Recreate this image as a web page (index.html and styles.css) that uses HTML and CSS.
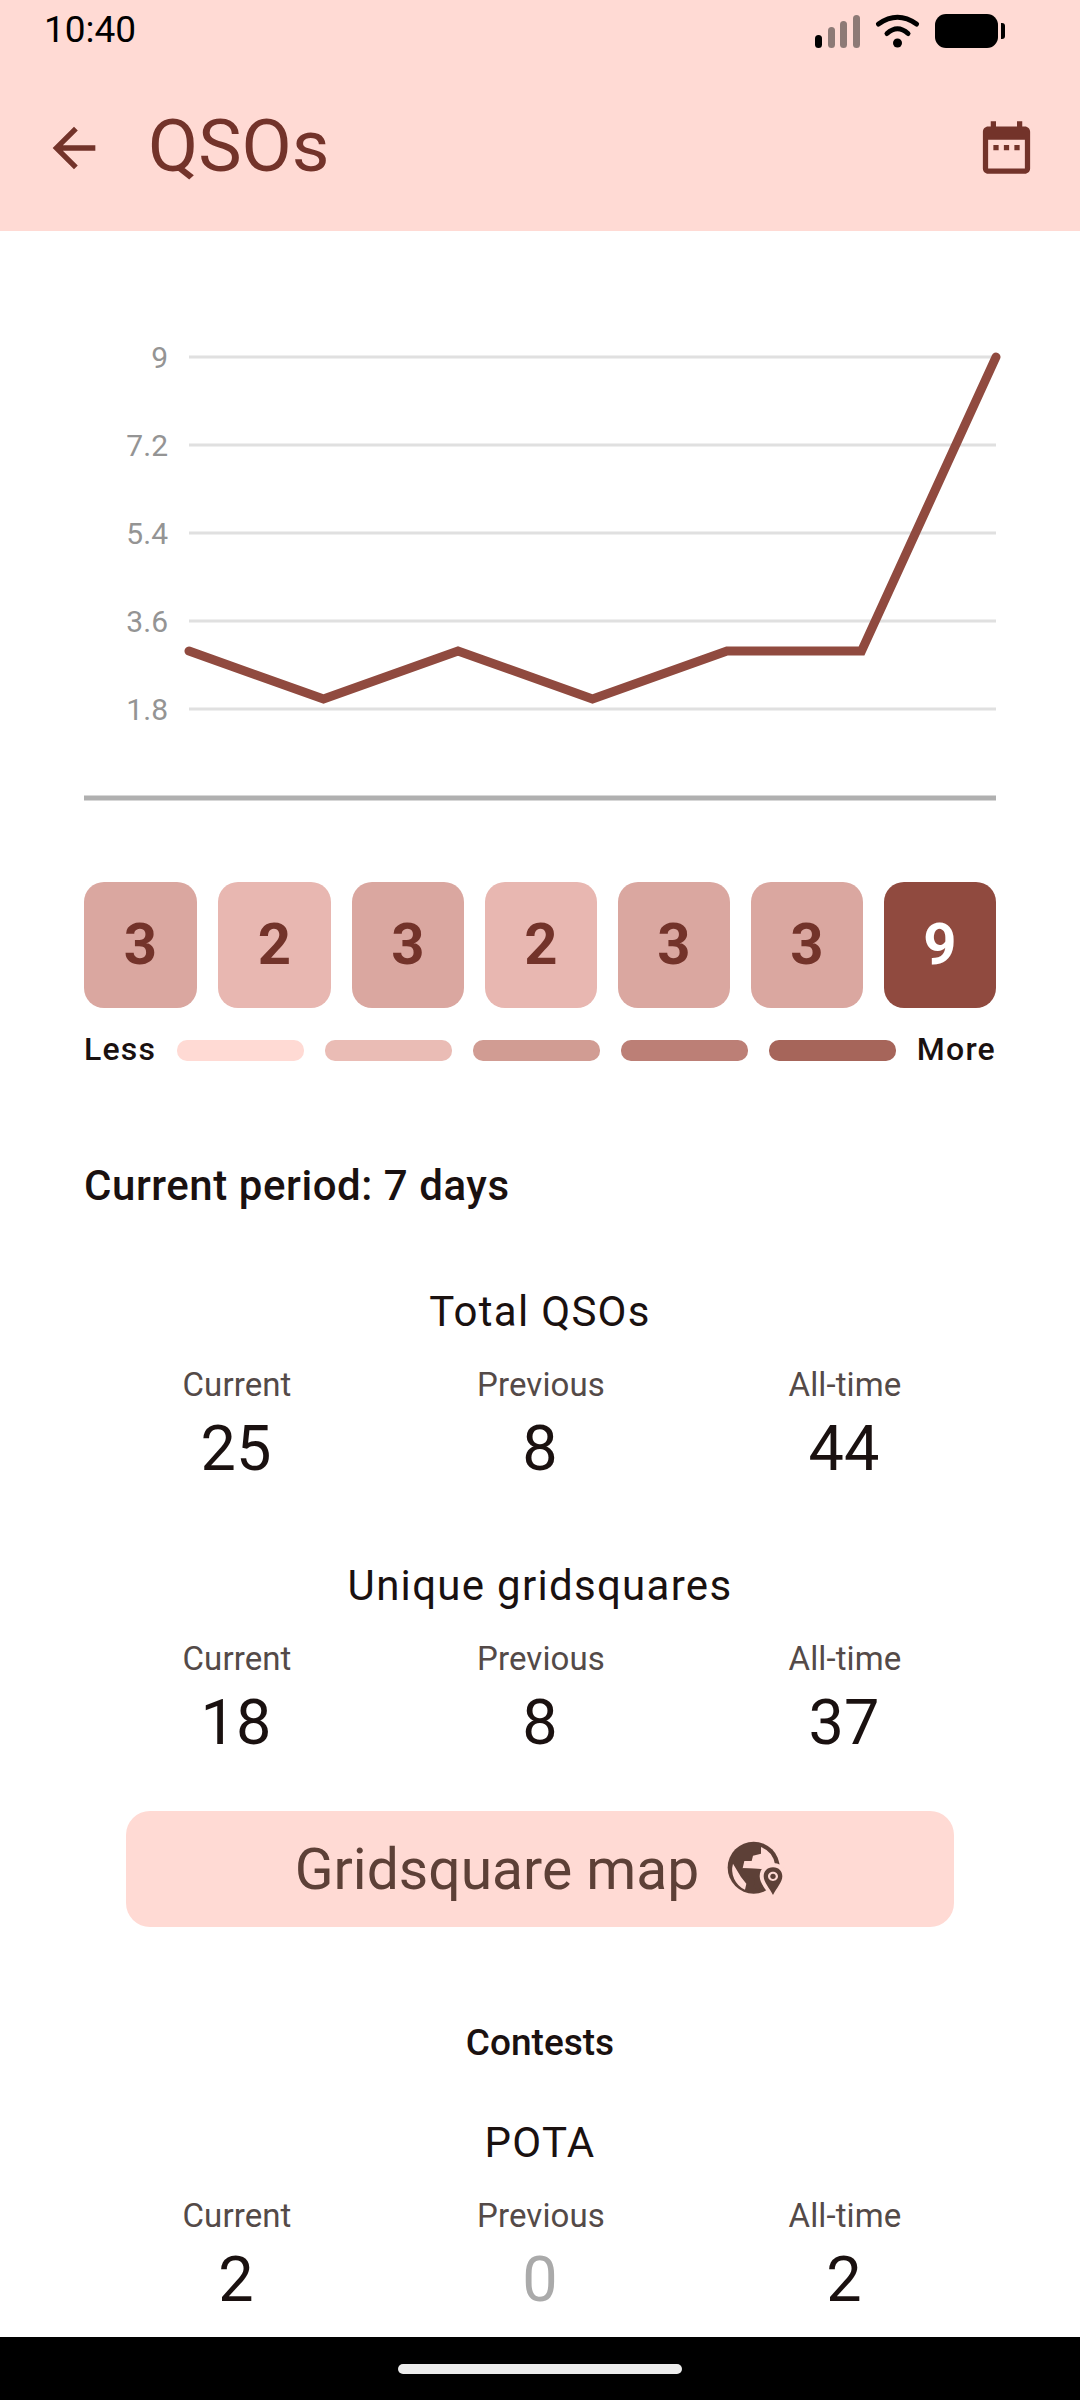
FILE: index.html
```html
<!DOCTYPE html>
<html lang="en">
<head>
<meta charset="utf-8">
<title>QSOs</title>
<link rel="stylesheet" href="styles.css">
</head>
<body>
<div class="screen">
  <header class="appbar">
    <div class="status">
      <span class="time">10:40</span>
      <svg class="status-icons" width="192" height="36" viewBox="0 0 192 36">
        <rect x="0" y="21" width="7" height="13" rx="3.5" fill="#000"/>
        <rect x="13" y="13" width="7" height="21" rx="3.5" fill="#8d7a76"/>
        <rect x="25" y="7" width="7" height="27" rx="3.5" fill="#8d7a76"/>
        <rect x="38" y="1" width="7" height="33" rx="3.5" fill="#8d7a76"/>
        <path d="M63.5 10 Q82.5 -3.5 101.5 10" fill="none" stroke="#000" stroke-width="5" stroke-linecap="round"/>
        <path d="M72 19.5 Q82.5 10 93 19.5" fill="none" stroke="#000" stroke-width="5" stroke-linecap="round"/>
        <circle cx="82.5" cy="29" r="4.5" fill="#000"/>
        <rect x="120" y="0" width="63" height="34" rx="11" fill="#000"/>
        <path d="M186 9h1a3 3 0 0 1 3 3v10a3 3 0 0 1-3 3h-1z" fill="#000"/>
      </svg>
    </div>
    <div class="toolbar">
      <svg class="back" viewBox="0 0 24 24"><path d="M20 11H7.83l5.59-5.59L12 4l-8 8 8 8 1.41-1.41L7.83 13H20v-2z"/></svg>
      <h1 class="title">QSOs</h1>
      <svg class="cal" viewBox="0 0 24 24"><path d="M9 11H7v2h2v-2zm4 0h-2v2h2v-2zm4 0h-2v2h2v-2zm2-7h-1V2h-2v2H8V2H6v2H5c-1.11 0-1.99.9-1.99 2L3 20c0 1.1.89 2 2 2h14c1.1 0 2-.9 2-2V6c0-1.1-.9-2-2-2zm0 16H5V9h14v11z"/></svg>
    </div>
  </header>

  <main class="content">
    <svg class="chart" width="912" height="480" viewBox="84 330 912 480">
      <g class="grid">
        <line x1="189" x2="996" y1="357" y2="357"/>
        <line x1="189" x2="996" y1="445" y2="445"/>
        <line x1="189" x2="996" y1="533" y2="533"/>
        <line x1="189" x2="996" y1="621" y2="621"/>
        <line x1="189" x2="996" y1="709" y2="709"/>
      </g>
      <line class="axis" x1="84" x2="996" y1="798" y2="798"/>
      <g class="ticks">
        <text x="168" y="368">9</text>
        <text x="168" y="456">7.2</text>
        <text x="168" y="544">5.4</text>
        <text x="168" y="632">3.6</text>
        <text x="168" y="720">1.8</text>
      </g>
      <polyline class="series" points="189,651 323.5,699 458,651 592.5,699 727,651 861.5,651 996,357"/>
    </svg>

    <div class="days">
      <div class="day day-3">3</div>
      <div class="day day-2">2</div>
      <div class="day day-3">3</div>
      <div class="day day-2">2</div>
      <div class="day day-3">3</div>
      <div class="day day-3">3</div>
      <div class="day day-9">9</div>
    </div>

    <div class="legend">
      <span class="legend-label">Less</span>
      <i class="swatch s1"></i><i class="swatch s2"></i><i class="swatch s3"></i><i class="swatch s4"></i><i class="swatch s5"></i>
      <span class="legend-label">More</span>
    </div>

    <h2 class="period">Current period: 7 days</h2>

    <section class="stat stat-first">
      <h3 class="stat-title">Total QSOs</h3>
      <div class="cols">
        <div class="col"><span class="label">Current</span><span class="num">25</span></div>
        <div class="col"><span class="label">Previous</span><span class="num">8</span></div>
        <div class="col"><span class="label">All-time</span><span class="num">44</span></div>
      </div>
    </section>

    <section class="stat stat-second">
      <h3 class="stat-title">Unique gridsquares</h3>
      <div class="cols">
        <div class="col"><span class="label">Current</span><span class="num">18</span></div>
        <div class="col"><span class="label">Previous</span><span class="num">8</span></div>
        <div class="col"><span class="label">All-time</span><span class="num">37</span></div>
      </div>
    </section>

    <button class="map-btn" type="button">
      <span>Gridsquare map</span>
      <svg class="globe" width="60" height="60" viewBox="42 60 180 180">
        <circle cx="128" cy="146" r="78" fill="#5d4037"/>
        <path d="M150 84 L150 104 L126 110 L122 126 L100 126 L95 148 L150 150 L186 148 L192 136 A66 66 0 0 0 150 84Z" fill="#ffdad4"/>
        <path d="M95 148 L150 150 L160 150 L145 215 L128 205 L132 180 L108 172Z" fill="#5d4037"/>
        <path d="M66 134 L90 174 L106 194 L102 212 A66 66 0 0 1 66 134Z" fill="#ffdad4"/>
        <path d="M186 132 C212 132 226 152 226 172 C226 196 200 220 186 240 C172 220 146 196 146 172 C146 152 160 132 186 132Z" fill="#ffdad4"/>
        <path fill-rule="evenodd" d="M186 145 C204 145 214 158 214 172 C214 190 196 208 186 228 C176 208 158 190 158 172 C158 158 168 145 186 145Z M186 158 C178 158 171 164 171 172 C171 180 178 186 186 186 C194 186 201 180 201 172 C201 164 194 158 186 158Z" fill="#5d4037"/>
        <circle cx="186" cy="172" r="8" fill="#5d4037"/>
      </svg>
    </button>

    <h2 class="contests">Contests</h2>

    <section class="stat stat-pota">
      <h3 class="stat-title">POTA</h3>
      <div class="cols">
        <div class="col"><span class="label">Current</span><span class="num">2</span></div>
        <div class="col"><span class="label">Previous</span><span class="num num-zero">0</span></div>
        <div class="col"><span class="label">All-time</span><span class="num">2</span></div>
      </div>
    </section>
  </main>

  <footer class="navbar"><div class="handle"></div></footer>
</div>
</body>
</html>
```

FILE: styles.css
```css
* { box-sizing: border-box; }
html, body { margin: 0; padding: 0; background: #fff; }
body { font-family: Roboto, "Liberation Sans", sans-serif; color: #1a1110; }
h1, h2, h3 { margin: 0; font-weight: 400; }

.screen { width: 1080px; height: 2400px; display: flex; flex-direction: column; overflow: hidden; }

.appbar { height: 231px; flex: none; background: #ffdad4; }
.status { height: 60px; padding: 14px 0 0 44px; display: flex; justify-content: space-between; align-items: flex-start; }
.time { font-size: 37px; line-height: 32px; color: #000; }
.status-icons { margin-right: 73px; }

.toolbar { height: 171px; padding: 4px 0 0 42px; display: flex; align-items: center; }
.back { width: 64px; height: 64px; fill: #73332a; flex: none; }
.title { font-size: 73px; line-height: 84px; color: #73332a; margin: 0 0 4px 42px; flex: 1; }
.cal { width: 63px; height: 63px; fill: #73332a; margin-right: 42px; }

.content { flex: 1; min-height: 0; overflow: hidden; padding: 99px 84px 0; }
.chart { display: block; overflow: visible; }
.grid line { stroke: #e0e0e0; stroke-width: 3; }
.axis { stroke: #b0b0b0; stroke-width: 5; }
.ticks text { font-size: 30px; fill: #949494; text-anchor: end; }
.series { fill: none; stroke: #904a3f; stroke-width: 9; stroke-linejoin: miter; stroke-linecap: round; }

.days { display: flex; gap: 21px; margin-top: 72px; }
.day { flex: 0 0 112px; height: 126px; padding-bottom: 2px; border-radius: 20px; display: flex; align-items: center; justify-content: center; font-size: 58px; font-weight: 700; color: #73332a; }
.day:nth-child(-n+2) { flex-basis: 113px; }
.day-2 { background: #e8b7b1; }
.day-3 { background: #daa7a0; }
.day-9 { background: #904a3f; color: #fff; }

.legend { display: flex; align-items: center; gap: 21px; height: 21px; margin-top: 32px; }
.legend-label { font-size: 32px; line-height: 21px; font-weight: 500; letter-spacing: 1.2px; color: #1a1110; padding-bottom: 2px; }
.swatch { flex: 1; height: 21px; border-radius: 10px; }
.s1 { background: #ffdad4; }
.s2 { background: #eabcb5; }
.s3 { background: #d19c93; }
.s4 { background: #bc7f76; }
.s5 { background: #a6655a; }

.period { font-size: 42px; line-height: 50px; font-weight: 500; margin-top: 100px; letter-spacing: 0.55px; }

.stat { text-align: center; }
.stat-first { margin-top: 76px; }
.stat-second { margin-top: 75px; }
.stat-pota { margin-top: 53px; }
.stat-title { font-size: 42px; line-height: 50px; letter-spacing: 1.3px; }
.cols { display: grid; grid-template-columns: repeat(3, 1fr); margin-top: 28px; }
.col { display: flex; flex-direction: column; align-items: center; }
.label { font-size: 33px; line-height: 40px; letter-spacing: 0.1px; padding-left: 2px; color: #544a48; }
.num { font-size: 63px; line-height: 74px; margin-top: 7px; }
.num-zero { color: #aaa; }

.map-btn { display: flex; align-items: center; justify-content: center; gap: 26px; width: 828px; height: 116px; margin: 51px auto 0; padding: 0; border: 0; border-radius: 24px; background: #ffdad4; color: #5d4037; font-family: inherit; font-size: 57px; }

.contests { font-size: 37px; line-height: 44px; font-weight: 500; text-align: center; margin-top: 94px; }

.navbar { height: 63px; flex: none; background: #000; display: flex; justify-content: center; padding-top: 27px; }
.handle { width: 284px; height: 10px; border-radius: 5px; background: #ececec; }
```
